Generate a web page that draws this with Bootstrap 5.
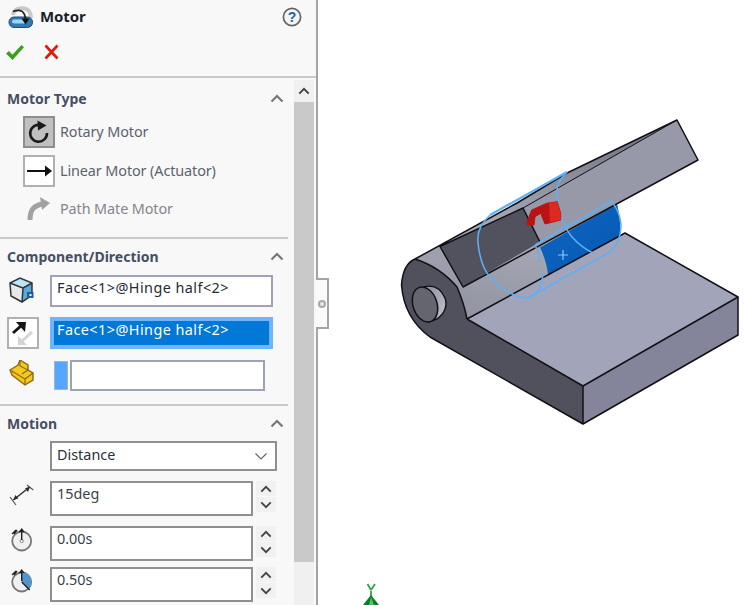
<!DOCTYPE html>
<html lang="en">
<head>
<meta charset="utf-8">
<title>Motor</title>
<link href="https://cdn.jsdelivr.net/npm/bootstrap@5.3.0/dist/css/bootstrap.min.css" rel="stylesheet">
<style>
html,body{height:605px;overflow:hidden;background:#fff;}
body{font-family:"Noto Sans","Open Sans","Liberation Sans",sans-serif;font-size:14px;color:#2a2f3a;}
.pm-panel{width:318px;height:605px;flex:none;background:#f8f8f8;border-right:2px solid #a4a4a4;position:relative;}
.pm-head{height:78px;flex:none;border-bottom:2px solid #c9c9c9;}
.pm-title{height:33px;padding-left:8px;padding-right:14px;}
.pm-title-text{font-size:15px;font-weight:700;color:#1b1f2a;margin-left:7px;letter-spacing:-.1px;}
.pm-actions{padding-left:5px;gap:19px;height:26px;margin-top:6px;}
.pm-main{height:527px;}
.pm-sections{width:288px;flex:none;}
.pm-section{border-bottom:2px solid #c9c9c9;padding-top:8px;}
.pm-sec-a{height:161px;padding-top:11px;}
.pm-sec-b{height:167px;}
.pm-sec-c{padding-top:8px;}
.pm-sec-head{height:20px;padding-left:7px;padding-right:4px;padding-bottom:2px;font-size:14px;font-weight:700;color:#444f63;}
.pm-opt{height:32px;margin-left:23px;margin-bottom:7px;color:#5c6270;font-size:14.4px;letter-spacing:-.1px;}
.pm-opt-first{margin-top:7px;}
.pm-opt-off{color:#85868d;margin-top:9px;height:26px;}
.pm-ibtn{width:32px;height:32px;flex:none;margin-right:5px;border:2px solid #b0b0b0;background:#fff;}
.pm-ibtn-on{background:#c0c0c0;border-color:#8e8e8e;}
.pm-ibtn-plain{border:0;background:none;height:26px;}
.pm-row{padding-left:7px;height:32px;}
.pm-row-first{margin-top:8px;}
.pm-row-next{margin-top:10px;}
.pm-row-sel{height:30px;margin-top:7px;}
.pm-row-spin{height:35px;margin-top:10px;}
.pm-row-last{margin-top:6px;}
.pm-side{width:43px;flex:none;}
.pm-field.form-control{border-radius:0;border:2px solid #9da2b4;background:#fff;padding:0 5px;height:32px;font-size:14.4px;line-height:21px;color:#262a36;box-shadow:none;min-height:0;}
.pm-field-w{width:223px;flex:none;letter-spacing:.45px;}
.pm-field-sel.form-control{border:4px solid #6db6ff;background:#0078d7;color:#fff;padding:0 3px;line-height:18px;}
.pm-swatch{width:14px;height:29px;background:#56a5ff;margin-left:4px;margin-right:2px;border:1px solid #a8b4c6;flex:none;}
.pm-blank{width:195px;height:31px;flex:none;border:2px solid #9da2b4;background:#fff;}
.pm-select.form-control{width:227px;height:30px;border:2px solid #8f8f8f;display:flex;align-items:center;justify-content:space-between;padding:0 7px 0 5px;color:#2b2f3b;line-height:20px;}
.pm-select-text{padding-bottom:2px;}
.pm-spin-field.form-control{width:203px;height:35px;border:2px solid #8f8f8f;flex:none;color:#3b3f4b;}
.pm-spin{width:20px;margin-left:3px;gap:1px;flex:none;align-self:flex-start;}
.pm-spin>div{height:15px;background:#f1f1f1;}
.pm-scroll{width:20px;margin-left:6px;margin-top:2px;flex:none;background:#f0f0f0;}
.pm-scroll-up{height:22px;}
.pm-scroll-thumb{height:460px;background:#c9c9c9;}
.pm-tab{position:absolute;left:316px;top:278px;width:13px;height:51px;background:#fafafa;border:2px solid #a4a4a4;border-left:0;}
.pm-tab-dot{width:8px;height:8px;border-radius:50%;border:2px solid #a8a8a8;background:#e8e8e8;}
.pm-canvas{flex:1 1 auto;min-width:0;display:block;}
</style>
</head>
<body class="m-0">
<svg width="0" height="0" class="position-absolute">
<symbol id="up-chev" viewBox="0 0 14 9"><polyline points="1.5,7.5 7,2 12.5,7.5" fill="none" stroke="currentColor" stroke-width="2.2"/></symbol>
<symbol id="down-chev" viewBox="0 0 14 9"><polyline points="1.5,1.5 7,7 12.5,1.5" fill="none" stroke="currentColor" stroke-width="2.2"/></symbol>
</svg>
<div class="d-flex">
<aside class="pm-panel d-flex flex-column">
  <header class="pm-head">
    <div class="pm-title d-flex align-items-center">
      <svg width="25" height="24" viewBox="0 0 25 24">
        <path d="M5 10C6 3 16 1 21 6c2 3 2 5 2 7" fill="none" stroke="#c9c9c9" stroke-width="4"/>
        <rect x="1" y="12" width="23.500" height="10.500" rx="5" fill="#2f79b4" stroke="#1c4f7c"/>
        <rect x="4" y="14.500" width="15" height="4" rx="2" fill="#9ed7f2"/>
        <path d="M5 6.500c8-3 12 0 12.500 8" fill="none" stroke="#222" stroke-width="1.800"/>
        <path d="M13.500 13.500h8l-4 6z" fill="#111"/>
      </svg>
      <span class="pm-title-text">Motor</span>
      <svg class="ms-auto" width="20" height="20" viewBox="0 0 20 20">
        <circle cx="10" cy="10" r="8.600" fill="#f4f4f4" stroke="#62666c" stroke-width="1.700"/>
        <text x="10" y="15" text-anchor="middle" font-family="Liberation Sans, sans-serif" font-size="14" font-weight="700" fill="#1d5fa8">?</text>
      </svg>
    </div>
    <div class="pm-actions d-flex align-items-center">
      <svg width="20" height="17" viewBox="0 0 20 17"><path d="M1 9.500l3-2.600 3.400 3.800L16.500 1 19 3.200 7.500 16z" fill="#37a11c"/></svg>
      <svg width="15" height="16" viewBox="0 0 15 16"><path d="M1.500 1.500l12 13M13.500 1.500l-12 13" stroke="#e0190c" stroke-width="2.600" fill="none"/></svg>
    </div>
  </header>
  <div class="pm-main d-flex">
    <div class="pm-sections">
      <section class="pm-section pm-sec-a">
        <div class="pm-sec-head d-flex justify-content-between align-items-center">
          <span>Motor Type</span>
          <svg width="14" height="9" style="color:#777"><use href="#up-chev"/></svg>
        </div>
        <div class="pm-opt pm-opt-first d-flex align-items-center">
          <div class="pm-ibtn pm-ibtn-on d-flex align-items-center justify-content-center">
            <svg width="24" height="24" viewBox="0 0 24 24"><path d="M14.500 5.400A8.400 8.400 0 1 0 20 13" fill="none" stroke="#1a1a1a" stroke-width="2.600"/><path d="M10.500 0.500l9 5-8.500 5z" fill="#1a1a1a"/></svg>
          </div>
          <span>Rotary Motor</span>
        </div>
        <div class="pm-opt d-flex align-items-center">
          <div class="pm-ibtn d-flex align-items-center justify-content-center">
            <svg width="26" height="16" viewBox="0 0 26 16"><path d="M1 8h19" stroke="#111" stroke-width="2"/><path d="M19 2.500L26 8l-7 5.500z" fill="#111"/></svg>
          </div>
          <span>Linear Motor (Actuator)</span>
        </div>
        <div class="pm-opt pm-opt-off d-flex align-items-center">
          <div class="pm-ibtn pm-ibtn-plain">
            <svg width="32" height="26" viewBox="0 0 32 26" class="d-block"><path d="M7 24C7 13 11 10 19 8" fill="none" stroke="#a2a2a2" stroke-width="5"/><path d="M27 7L17 1l2 13z" fill="#a2a2a2"/></svg>
          </div>
          <span>Path Mate Motor</span>
        </div>
      </section>
      <section class="pm-section pm-sec-b">
        <div class="pm-sec-head d-flex justify-content-between align-items-center">
          <span>Component/Direction</span>
          <svg width="14" height="9" style="color:#777"><use href="#up-chev"/></svg>
        </div>
        <div class="pm-row pm-row-first d-flex align-items-center">
          <div class="pm-side">
            <svg width="28" height="32" viewBox="0 0 28 32" class="d-block">
              <path d="M3 8l10-5 12 5v12l-10 7-11-6z" fill="#e8e8e8"/>
              <path d="M3 8l10-5 12 5-9 5z" fill="#bfe4f6"/>
              <path d="M16 13l9-5v12l-10 7z" fill="#59a9da"/>
              <path d="M3 8l10-5 12 5v12l-10 7-11-6zM3 8l13 5-1 14M16 13l9-5" fill="none" stroke="#30353d" stroke-width="1.500"/>
              <rect x="20" y="17" width="6.500" height="6" fill="#1f5f9f"/><rect x="22.500" y="19" width="2" height="2" fill="#fff"/>
            </svg>
          </div>
          <div class="pm-field form-control pm-field-w">Face&lt;1&gt;@Hinge half&lt;2&gt;</div>
        </div>
        <div class="pm-row pm-row-next d-flex align-items-center">
          <div class="pm-side">
            <div class="pm-ibtn m-0 d-flex align-items-center justify-content-center">
              <svg width="24" height="24" viewBox="0 0 24 24">
                <path d="M21 11L10 21" stroke="#d4d4d4" stroke-width="3"/>
                <path d="M7 24v-9l9 9z" fill="#d4d4d4"/>
                <path d="M2 12L11 4" stroke="#151515" stroke-width="3"/>
                <path d="M15 1H5l9 10z" fill="#151515"/>
              </svg>
            </div>
          </div>
          <div class="pm-field pm-field-sel form-control pm-field-w">Face&lt;1&gt;@Hinge half&lt;2&gt;</div>
        </div>
        <div class="pm-row pm-row-next d-flex align-items-center">
          <div class="pm-side">
            <svg width="28" height="30" viewBox="0 0 28 30" class="d-block">
              <path d="M3 10l8-5 2-5 8 5v5l5 3v7l-8 5-13-10z" fill="#f4c81f" stroke="#8f6a12" stroke-width="1.400"/>
              <path d="M3 10l15 9v6M18 19l8-6M13 0v6l8 4-6 4" fill="none" stroke="#8f6a12" stroke-width="1.200"/>
            </svg>
          </div>
          <div class="pm-swatch"></div>
          <div class="pm-blank"></div>
        </div>
      </section>
      <section class="pm-sec-c">
        <div class="pm-sec-head d-flex justify-content-between align-items-center">
          <span>Motion</span>
          <svg width="14" height="9" style="color:#777"><use href="#up-chev"/></svg>
        </div>
        <div class="pm-row pm-row-sel d-flex align-items-center">
          <div class="pm-side"></div>
          <div class="pm-field pm-select form-control">
            <span class="pm-select-text">Distance</span>
            <svg width="14" height="9" style="color:#666"><polyline points="1.500,1.500 7,7 12.500,1.500" fill="none" stroke="currentColor" stroke-width="1.200"/></svg>
          </div>
        </div>
        <div class="pm-row pm-row-spin d-flex align-items-center">
          <div class="pm-side">
            <svg width="28" height="35" viewBox="0 0 28 35" class="d-block">
              <path d="M6.300 19L23 5.700" stroke="#2b2b2b" stroke-width="1.400"/>
              <path d="M6.300 19l2-5 3 3.600zM23 5.700l-5 1.600 3 3.600z" fill="#2b2b2b"/>
              <path d="M3 16l6 8M20 4l6.300 5" stroke="#555" stroke-width="1.200"/>
            </svg>
          </div>
          <div class="pm-field pm-spin-field form-control">15deg</div>
          <div class="pm-spin d-flex flex-column">
            <div class="d-flex align-items-center justify-content-center"><svg width="12" height="8" style="color:#444"><use href="#up-chev"/></svg></div>
            <div class="d-flex align-items-center justify-content-center"><svg width="12" height="8" style="color:#444"><use href="#down-chev"/></svg></div>
          </div>
        </div>
        <div class="pm-row pm-row-spin d-flex align-items-center">
          <div class="pm-side">
            <svg width="28" height="35" viewBox="0 0 28 35" class="d-block">
              <circle cx="14.700" cy="15" r="9.500" fill="#f0f0f0" stroke="#777" stroke-width="1.800"/>
              <circle cx="14.700" cy="15" r="1.600" fill="#fff" stroke="#888"/>
              <path d="M14.700 14V3" stroke="#222" stroke-width="1.400"/><path d="M11.700 6l3-4 3 4z" fill="#222"/>
              <path d="M5 8l4-4M7 8l3-4" stroke="#222" stroke-width="1.300"/>
            </svg>
          </div>
          <div class="pm-field pm-spin-field form-control">0.00s</div>
          <div class="pm-spin d-flex flex-column">
            <div class="d-flex align-items-center justify-content-center"><svg width="12" height="8" style="color:#444"><use href="#up-chev"/></svg></div>
            <div class="d-flex align-items-center justify-content-center"><svg width="12" height="8" style="color:#444"><use href="#down-chev"/></svg></div>
          </div>
        </div>
        <div class="pm-row pm-row-spin pm-row-last d-flex align-items-center">
          <div class="pm-side">
            <svg width="28" height="35" viewBox="0 0 28 35" class="d-block">
              <circle cx="14.700" cy="15" r="9.500" fill="#f0f0f0" stroke="#777" stroke-width="1.800"/>
              <path d="M14.700 15V5.500a9.500 9.500 0 0 1 7 16z" fill="#4d96d2"/>
              <path d="M14.700 14V3M14.700 15l8 8" stroke="#222" stroke-width="1.400"/><path d="M11.700 6l3-4 3 4z" fill="#222"/>
              <path d="M5 8l4-4M7 8l3-4" stroke="#222" stroke-width="1.300"/>
            </svg>
          </div>
          <div class="pm-field pm-spin-field form-control">0.50s</div>
          <div class="pm-spin d-flex flex-column">
            <div class="d-flex align-items-center justify-content-center"><svg width="12" height="8" style="color:#444"><use href="#up-chev"/></svg></div>
            <div class="d-flex align-items-center justify-content-center"><svg width="12" height="8" style="color:#444"><use href="#down-chev"/></svg></div>
          </div>
        </div>
      </section>
    </div>
    <div class="pm-scroll">
      <div class="pm-scroll-up d-flex align-items-center justify-content-center"><svg width="12" height="8" style="color:#3f3f3f"><use href="#up-chev"/></svg></div>
      <div class="pm-scroll-thumb"></div>
    </div>
  </div>
  <div class="pm-tab d-flex align-items-center justify-content-center"><div class="pm-tab-dot"></div></div>
</aside>
<svg class="pm-canvas" width="427" height="605" viewBox="318 0 427 605">
  <defs>
    <linearGradient id="g-blue" x1="0" y1="0" x2="1" y2="1"><stop offset="0" stop-color="#0d66c6"/><stop offset="1" stop-color="#0658ad"/></linearGradient>
    <linearGradient id="g-cyl" x1="0" y1="1" x2=".35" y2="0"><stop offset="0" stop-color="#8f909e"/><stop offset=".5" stop-color="#a8a9b5"/><stop offset="1" stop-color="#7b7c89"/></linearGradient>
    <linearGradient id="g-boss" x1="0" y1="0" x2="1" y2="1"><stop offset="0" stop-color="#8d8e9b"/><stop offset="1" stop-color="#c4c5cf"/></linearGradient>
  </defs>
  <g stroke-linejoin="round">
    <!-- barrel -->
    <path d="M415 259L517 203L567 173L677 120L698 160L617 204Q621 222 620 235L625 233L467 319L445 290Z" fill="url(#g-cyl)"/>
    <!-- upper plate and its recessed face -->
    <path d="M523 208L677 120L698 160L540 245Z" fill="#9799a9"/>
    <path d="M440 246.500L523 208L540 242L463 287Z" fill="#51525e"/>
    <!-- lower plate -->
    <path d="M415 259Q440 267 457 287Q464 303 467 319L583 386V424L430 337Q404 318 401.500 285Q403 264 415 259Z" fill="#50515d"/>
    <path d="M467 319L625 233L738 297L583 386Z" fill="#a2a4ba"/>
    <path d="M583 386L738 297V335L583 424Z" fill="#84859a"/>
    <!-- selected face -->
    <path d="M540 247.500L617 204Q621 222 620 235L548 275.500Q547 262 540 247.500Z" fill="url(#g-blue)"/>
    <!-- black edges -->
    <g fill="none" stroke="#101014" stroke-width="1.500">
      <path d="M415 259L517 203L567 173L677 120L698 160L463 287L440 246.500L523 208L540 242"/>
      <path d="M523 208L677 120" stroke-width="1"/>
      <path d="M467 319L625 233L738 297L583 386L467 319"/>
      <path d="M415 259Q403 264 401.500 285Q404 318 430 337L583 424L738 335V297M583 386V424"/>
      <path d="M415 259Q440 267 457 287Q464 303 467 319"/>
    </g>
    <!-- boss -->
    <path d="M424 287Q438 283 445 298Q449 310 437 319L428 322Z" fill="url(#g-boss)" stroke="#101014" stroke-width="1.400"/>
    <ellipse cx="425" cy="304.500" rx="12" ry="18" transform="rotate(-18 425 304.500)" fill="#64656f" stroke="#101014" stroke-width="1.500"/>
    <!-- selection outlines -->
    <g fill="none" stroke="#5db0f7" stroke-width="1.500">
      <path d="M490 215L567 172" stroke-width="2.200"/>
      <path d="M490 215Q476 228 478 243Q480 262 487 273Q498 287 510 293Q520 298 528 298Q538 294 540 287Q543 280 543 273"/>
      <path d="M567 172Q557 182 557 190Q558 220 572 237Q582 248 593 253"/>
      <path d="M535 245L612 201L617 210Q621 218 621 227Q620 238 617 243Q614 248 610 252L528 298"/>
      <path d="M535 245L538 252L540 262"/>
      <path d="M558 255h10M563 250v10" stroke-width="1.200" stroke="#8cc8fb"/>
    </g>
    <!-- motor arrow -->
    <path d="M526.700 223L531.700 210L546.700 203.300L557.300 201.700L560.700 213.300L560.700 220L545 224L540.700 213.300L535 216.700L534 225L527.300 225Z" fill="#bb1212" stroke="#bb1212" stroke-width="1"/>
    <path d="M549 203L557.300 201.700L560.700 213.300L560.700 220L550 222Z" fill="#dc2a20"/>
    <!-- triad -->
    <path d="M371 591V596M371 590L367.500 584M371 590L375 584" stroke="#2fa64a" stroke-width="1.800" fill="none"/>
    <path d="M371 595L379 605H363Z" fill="#0d7a24"/>
    <path d="M371 597L374 605H369Z" fill="#52c45f"/>
  </g>
</svg>
</div>
</body>
</html>
